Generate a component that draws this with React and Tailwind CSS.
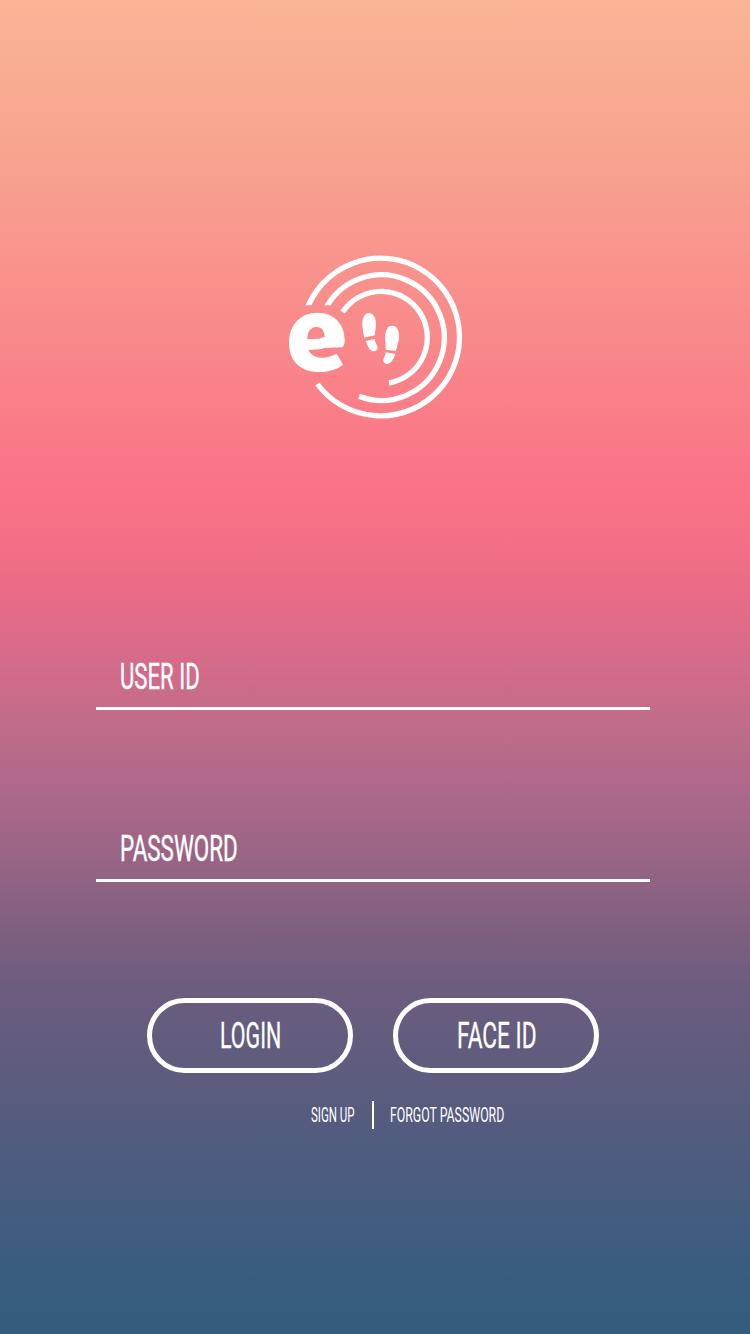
function Logo() {
  return (
    <svg className="h-[185px] w-[200px]" viewBox="0 0 600 555" fill="none" aria-label="e steps">
      <clipPath id="gap">
        <path d="M0 0H600V555H0V350H250V181H0Z" />
      </clipPath>
      <g stroke="#fff" strokeWidth="16">
        <path clipPath="url(#gap)" d="M93 200A236.500 236.500 0 1 1 127 417" />
        <path clipPath="url(#gap)" d="M149 197A188.500 188.500 0 1 1 252 454" />
        <path d="M203 201A138.500 138.500 0 1 1 342 414" />
      </g>
      <g fill="#fff">
        <path
          fillRule="evenodd"
          d="M127 203C178 203 209 237 209 286C209 299 206 307 198 307L146 309C141 315 110 313 101 315C105 330 122 338 141 338C158 338 169 334 185 326L204 359C186 374 160 381 132 381C78 381 42 349 42 293C42 238 78 203 127 203ZM97 283L134 281C143 276 149 279 149 273C148 256 139 246 123 246C107 246 97 260 97 283Z"
        />
        <path d="M282 204C295 204 302 218 303 235C303 249 300 258 299 271C288 274 278 276 267 278C266 263 261 252 262 232C263 216 270 204 282 204Z" />
        <path d="M272 288L299 282C300 292 309 304 308 310C306 317 299 320 292 318C280 314 278 300 272 288Z" />
        <path d="M353 242C366 243 373 256 372 276C371 292 366 302 363 318L332 314C333 298 329 287 331 269C333 251 341 241 353 242Z" />
        <path d="M332 322L361 327C356 341 350 355 338 357C330 357 324 352 325 345C326 337 331 333 332 322Z" />
      </g>
    </svg>
  );
}

function Field({ label, scale }) {
  return (
    <div className="h-[58px] w-[554px] border-b-[3px] border-white pt-px pl-6">
      <span
        className={`inline-block origin-left whitespace-nowrap text-[36px] leading-[48px] [-webkit-text-stroke:0.4px_white] ${scale}`}
      >
        {label}
      </span>
    </div>
  );
}

function PillButton({ label, pad, scale }) {
  return (
    <button className={`flex h-[75px] w-[206px] items-center rounded-full border-[5px] border-white ${pad}`}>
      <span className={`origin-left whitespace-nowrap pt-px text-[36px] leading-[48px] [-webkit-text-stroke:0.3px_white] ${scale}`}>
        {label}
      </span>
    </button>
  );
}

export default function App() {
  return (
    <main className="flex h-[1334px] w-[750px] flex-col overflow-hidden bg-[linear-gradient(180deg,#fab496_0px,#f8a690_135px,#fa7286_490px,#f57086_534px,#e96b88_596px,#d56b89_660px,#c26c8a_718px,#ae688a_788px,#996485_858px,#7d5f80_932px,#6c5c7e_990px,#365c7f_1290px,#355b7d_1334px)] font-['Roboto',sans-serif] text-white">
      <div className="pt-[245px] pl-[275px]">
        <Logo />
      </div>
      <form className="mt-[222px] flex flex-col gap-[114px] pl-24" onSubmit={(e) => e.preventDefault()}>
        <Field label="USER ID" scale="scale-x-[0.615]" />
        <Field label="PASSWORD" scale="scale-x-[0.623]" />
      </form>
      <div className="mt-[116px] flex gap-10 pl-[147px]">
        <PillButton label="LOGIN" pad="pl-[68px]" scale="scale-x-[0.595]" />
        <PillButton label="FACE ID" pad="pl-[59px]" scale="scale-x-[0.63]" />
      </div>
      <nav className="mt-7 flex h-7 items-center pl-[311px] text-[20px] leading-7">
        <a className="w-[61px]">
          <span className="inline-block origin-left scale-x-[0.575] whitespace-nowrap">SIGN UP</span>
        </a>
        <i className="h-7 w-[2px] bg-white" />
        <a className="pl-4">
          <span className="inline-block origin-left scale-x-[0.615] whitespace-nowrap">FORGOT PASSWORD</span>
        </a>
      </nav>
    </main>
  );
}
